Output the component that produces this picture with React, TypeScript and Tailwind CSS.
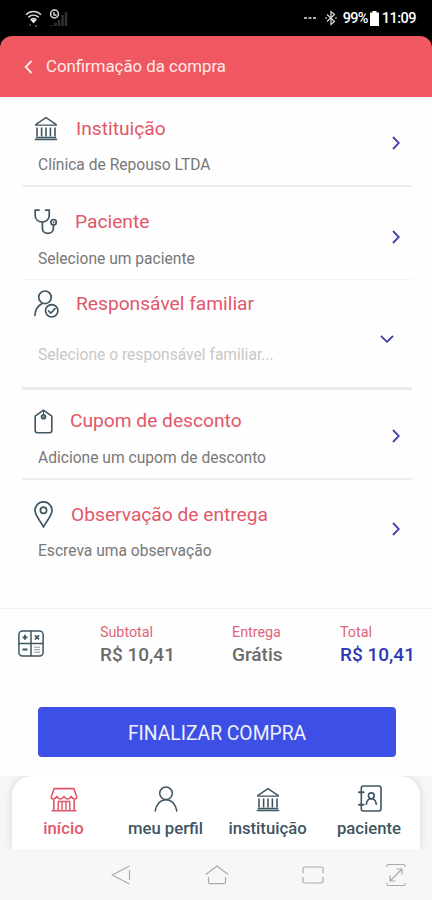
import type { ReactNode } from 'react';

interface IconProps {
  className?: string;
}

function BankIcon({ className }: IconProps) {
  return (
    <svg viewBox="0 0 24 24" fill="none" stroke="currentColor" strokeWidth="1.4" className={className}>
      <path d="M1 8.600h22M1.600 8.200 12 1.200l10.400 7M0.800 23h22.400M1.800 21h20.400" strokeLinejoin="round" />
      <path d="M3 11v9M7.600 11v9M12 11v9M16.400 11v9M21 11v9" strokeWidth="1.600" />
    </svg>
  );
}

function StethoscopeIcon({ className }: IconProps) {
  return (
    <svg viewBox="0 0 24 26" fill="none" stroke="currentColor" strokeWidth="1.700" strokeLinecap="round" className={className}>
      <path d="M5 1.200H1.200v5.300c0 3.800 2.800 6.500 7 6.500s7-2.700 7-6.500V1.200h-3.600" />
      <path d="M8.400 13v6.200c0 3 2.200 5.100 5.400 5.100s5.600-2.100 5.600-5.100V16" />
      <circle cx="19.600" cy="13.200" r="2.700" />
      <path d="M19.600 13v.4" />
    </svg>
  );
}

function PersonCheckIcon({ className }: IconProps) {
  return (
    <svg viewBox="0 0 25 28" fill="none" stroke="currentColor" strokeWidth="1.700" strokeLinecap="round" strokeLinejoin="round" className={className}>
      <circle cx="11" cy="7.300" r="6.300" />
      <path d="M0.900 25.500c.3-5.300 2.600-9.600 7.200-12" />
      <circle cx="17.700" cy="20.800" r="6.200" />
      <path d="m14.600 21 2.200 2.200 4.200-4.600" />
    </svg>
  );
}

function TagIcon({ className }: IconProps) {
  return (
    <svg viewBox="0 0 19 25" fill="none" stroke="currentColor" strokeWidth="1.600" strokeLinejoin="round" className={className}>
      <path d="M9.500 1.200 1.200 7.200v14.300c0 1.400.8 2.200 2.200 2.200h12.200c1.400 0 2.200-.8 2.200-2.200V7.200z" />
      <path d="M9.500 2v3.600" strokeWidth="1" />
      <circle cx="9.500" cy="7.800" r="2" fill="currentColor" fillOpacity=".6" />
    </svg>
  );
}

function PinIcon({ className }: IconProps) {
  return (
    <svg viewBox="0 0 19 27" fill="none" stroke="currentColor" strokeWidth="1.700" strokeLinejoin="round" className={className}>
      <path d="M9.500 26C7 20.500 1 15 1 9.300a8.500 8.500 0 0 1 17 0C18 15 12 20.500 9.500 26z" />
      <circle cx="9.500" cy="9.300" r="3.100" />
    </svg>
  );
}

function CalculatorIcon({ className }: IconProps) {
  return (
    <svg viewBox="0 0 26 27" fill="none" stroke="currentColor" strokeWidth="1.500" className={className}>
      <rect x="0.900" y="1" width="24.200" height="25" rx="3.500" />
      <path d="M13 1v25M1 13.500h24" />
      <path d="M7 4.800v5M4.500 7.300h5M4.500 19.500h5" strokeWidth="1.800" />
      <path d="m17 5.300 4 4M21 5.300l-4 4" strokeWidth="1.800" />
      <path d="M16 17.200h6M16 19.700h6M16 22.200h6" strokeWidth="1" strokeOpacity=".6" />
    </svg>
  );
}

function StoreIcon({ className }: IconProps) {
  return (
    <svg viewBox="0 0 28 25" fill="none" stroke="currentColor" strokeWidth="1.600" strokeLinejoin="round" className={className}>
      <path d="M4.200 1.600h19.600l3 8.400c0 1.400-.8 2-2 2-1.600 0-2.800-.9-3.600-2.600-.8 1.700-1.800 2.600-3.400 2.600s-2.800-.9-3.800-2.600c-1 1.700-2.200 2.600-3.800 2.600s-2.600-.9-3.400-2.600C6 11.100 4.800 12 3.200 12c-1.200 0-2-.6-2-2z" />
      <path d="M3.800 12.500v11M24.200 12.500v11M1.500 23.700h25" />
      <path d="M8.300 23v-8.500h11.400V23M12 15v8M16 15v8" strokeWidth="1.400" />
    </svg>
  );
}

function PersonIcon({ className }: IconProps) {
  return (
    <svg viewBox="0 0 24 26" fill="none" stroke="currentColor" strokeWidth="1.500" strokeLinecap="round" className={className}>
      <circle cx="12" cy="7.300" r="6.300" />
      <path d="M1.200 25C2.600 18 6.600 13.700 12 13.700S21.400 18 22.800 25" />
    </svg>
  );
}

function ContactsIcon({ className }: IconProps) {
  return (
    <svg viewBox="0 0 24 27" fill="none" stroke="currentColor" strokeWidth="1.600" strokeLinecap="round" className={className}>
      <rect x="3.300" y="1" width="19.700" height="25" rx="2.200" />
      <path d="M1 7.300h4.500M1 19.700h4.500" strokeWidth="2" />
      <circle cx="13.300" cy="10.800" r="2.900" />
      <path d="M8.300 19.300c.4-3.600 2-5.600 5-5.600s4.600 2 5 5.600" />
    </svg>
  );
}

function Chevron({ className }: IconProps) {
  return (
    <svg viewBox="0 0 8 14" fill="none" stroke="currentColor" strokeWidth="1.800" className={className}>
      <path d="m1 1 5.800 6L1 13" />
    </svg>
  );
}

interface RowProps {
  icon: ReactNode;
  title: string;
  text: string;
  className: string;
  titleClass: string;
  textClass?: string;
  chevronClass?: string;
}

function Row({ icon, title, text, className, titleClass, textClass = 'mt-[13px] text-[#787878]', chevronClass = 'mt-5 mr-3' }: RowProps) {
  return (
    <section className={`flex justify-between ml-[22px] mr-5 ${className}`}>
      <div>
        <div className="flex items-center h-6 ml-3">
          <div className="w-[27px] shrink-0 text-[#3f5563]">{icon}</div>
          <h2 className={`text-[19.2px] leading-6 text-[#e2566a] whitespace-nowrap ${titleClass}`}>{title}</h2>
        </div>
        <p className={`ml-4 text-[15.6px] leading-6 whitespace-nowrap ${textClass}`}>{text}</p>
      </div>
      <Chevron className={`w-2 h-3.5 text-[#4540b0] shrink-0 ${chevronClass}`} />
    </section>
  );
}

function StatusBar() {
  return (
    <div className="flex items-center justify-between h-9 pl-[25px] pr-4 bg-black text-white">
      <div className="flex items-center gap-2">
        <svg viewBox="0 0 18 18" fill="none" stroke="#d8d8d8" strokeWidth="1.600" className="w-[17px] h-[17px]">
          <path d="M1 5c4.500-4.500 11.500-4.500 16 0M3.500 7.800c3.300-3 7.700-3 11 0M6 10.300c1.800-1.500 4.200-1.500 6 0" />
          <path d="M5.500 10h7L9 14z" fill="#fff" stroke="none" />
          <path d="M5.500 15v2M11.500 16v2" stroke="#666" />
        </svg>
        <svg viewBox="0 0 18 18" fill="none" className="w-[18px] h-[18px]">
          <path d="M2 17v-1M5.500 17v-3M9 17v-6M12.500 17V6M16 17V3" stroke="#303030" strokeWidth="2.500" />
          <circle cx="4.500" cy="5" r="3.900" stroke="#ddd" strokeWidth="1.500" />
          <path d="M4 3v3h2.500" stroke="#ddd" strokeWidth="1.300" />
        </svg>
      </div>
      <div className="flex items-center font-medium text-[14.5px] leading-none">
        <svg viewBox="0 0 12 4" className="w-3 h-1 mr-[9px]" fill="#aaa">
          <path d="M0 1h3v2H0zM4.500 1h3v2h-3zM9 1h3v2H9z" />
        </svg>
        <svg viewBox="0 0 12 16" fill="none" stroke="#ddd" strokeWidth="1.200" className="w-3 h-4 mr-1.5">
          <path d="m2 4.500 7.500 7L6 14.500v-13l3.500 3-7.500 7M0 8h2M10 8h2" />
        </svg>
        <span className="mt-0.5 tracking-[-0.7px]">99%</span>
        <svg viewBox="0 0 9 15" className="w-[9px] h-[15px] ml-0.5" fill="#fff">
          <path d="M2.500 0h4v1.500H9V15H0V1.500h2.500z" />
        </svg>
        <span className="mt-0.5 ml-[3px] tracking-[-0.5px]">11:09</span>
      </div>
    </div>
  );
}

function Summary() {
  return (
    <div className="flex h-[99px] border-t border-[#f1f1f1] text-[#6b6b6b] whitespace-nowrap">
      <CalculatorIcon className="w-[26px] h-[27px] ml-[18px] mt-[21px] text-[#3f5563] shrink-0" />
      <div className="ml-14 mt-3 w-[132px]">
        <p className="text-[14.3px] leading-[22px] text-[#dc6678]">Subtotal</p>
        <p className="text-[19px] leading-6 font-medium">R$ 10,41</p>
      </div>
      <div className="mt-3 w-[108px]">
        <p className="text-[14.3px] leading-[22px] text-[#dc6678]">Entrega</p>
        <p className="text-[19px] leading-6 font-medium">Grátis</p>
      </div>
      <div className="mt-3">
        <p className="text-[14.3px] leading-[22px] text-[#dc6678]">Total</p>
        <p className="text-[19px] leading-6 font-medium text-[#2e37b5]">R$ 10,41</p>
      </div>
    </div>
  );
}

function TabBar() {
  return (
    <div className="h-[73px] px-3 bg-[#f7f7f7] overflow-hidden">
      <nav className="flex h-[73px] rounded-t-[20px] bg-white shadow-[0_0_8px_rgba(0,0,0,0.14)] text-[#3f5563] text-[16.7px] font-medium leading-5 whitespace-nowrap">
        <a className="flex flex-col items-center w-[103px] pt-[11px] text-[#e2566a]">
          <StoreIcon className="w-7 h-[25px]" />
          <span className="mt-[7px]">início</span>
        </a>
        <a className="flex flex-col items-center w-[101px] pt-[10px]">
          <PersonIcon className="w-6 h-[26px]" />
          <span className="mt-[7px]">meu perfil</span>
        </a>
        <a className="flex flex-col items-center w-[103px] pt-[11px]">
          <BankIcon className="w-6 h-[25px]" />
          <span className="mt-[7px]">instituição</span>
        </a>
        <a className="flex flex-col items-center w-[100px] pt-[9px]">
          <ContactsIcon className="w-6 h-[27px] ml-0.5" />
          <span className="mt-[7px]">paciente</span>
        </a>
      </nav>
    </div>
  );
}

function SystemBar() {
  return (
    <div className="flex items-center h-[51px] pl-[111px] bg-[#f7f7f7] text-[#aaa]">
      <svg viewBox="0 0 20 20" fill="none" stroke="currentColor" strokeWidth="1.200" className="w-5 h-5">
        <path d="M18.500 1 1.200 10l17.300 9M18.500 5v10" />
      </svg>
      <svg viewBox="0 0 24 20" fill="none" stroke="currentColor" strokeWidth="1.200" className="w-6 h-5 ml-[74px]">
        <path d="M.8 9.500 12 1l11.200 8.500M3.500 12v5c0 1 .6 1.700 1.700 1.700h13.600c1.100 0 1.700-.7 1.700-1.700v-5" />
      </svg>
      <svg viewBox="0 0 22 18" fill="none" stroke="currentColor" strokeWidth="1.200" className="w-[22px] h-[18px] ml-[73px]">
        <path d="M1 7V2.500C1 1.500 1.500 1 2.500 1h17c1 0 1.500.5 1.500 1.500V7M1 11v4.500c0 1 .5 1.500 1.500 1.500h17c1 0 1.500-.5 1.500-1.500V11" />
      </svg>
      <svg viewBox="0 0 20 24" fill="none" stroke="currentColor" strokeWidth="1.200" className="w-5 h-6 ml-[62px]">
        <path d="M1 4V3c0-1 .5-1.500 1.500-1.500h15c1 0 1.500.5 1.500 1.500v1M1 20v1c0 1 .5 1.500 1.500 1.500h15c1 0 1.500-.5 1.500-1.500v-1" />
        <path d="m4 18 12-12M10.500 6H16v5.500M9.500 18H4v-5.500" />
      </svg>
    </div>
  );
}

export default function App() {
  return (
    <div className="w-[432px] h-[900px] flex flex-col overflow-hidden bg-[#fefefe] font-['Roboto',sans-serif]">
      <StatusBar />
      <div className="bg-black">
        <header className="flex items-center h-[61px] pl-6 rounded-t-xl bg-[#ef5860] text-[#ffe9e9]">
          <Chevron className="w-[9px] h-3.5 rotate-180" />
          <h1 className="pt-px ml-[13px] text-[16.8px]">Confirmação da compra</h1>
        </header>
      </div>

      <main className="h-[511px] shrink-0">
        <Row
          icon={<BankIcon className="w-6 h-[25px]" />}
          title="Instituição"
          text="Clínica de Repouso LTDA"
          className="h-[90px] pt-[19px] border-b-2 border-[#eee]"
          titleClass="ml-[15px] pt-px"
        />
        <Row
          icon={<StethoscopeIcon className="w-6 h-[26px]" />}
          title="Paciente"
          text="Selecione um paciente"
          className="h-[93px] pt-[23px] border-b border-[#f4f4f4]"
          titleClass="ml-[14px]"
        />
        <Row
          icon={<PersonCheckIcon className="w-[25px] h-7" />}
          title="Responsável familiar"
          text="Selecione o responsável familiar..."
          className="h-[110px] pt-3 border-b-[3px] border-[#ebebeb]"
          titleClass="ml-[15px]"
          textClass="mt-[27px] text-[#c8c8c8]"
          chevronClass="mt-10 mr-[21px] rotate-90"
        />
        <Row
          icon={<TagIcon className="w-[19px] h-[25px]" />}
          title="Cupom de desconto"
          text="Adicione um cupom de desconto"
          className="h-[90px] pt-[19px] border-b-2 border-[#eee]"
          titleClass="ml-[9px]"
        />
        <Row
          icon={<PinIcon className="w-[19px] h-[27px]" />}
          title="Observação de entrega"
          text="Escreva uma observação"
          className="h-[93px] pt-[22px] border-b border-[#fbfbfb]"
          titleClass="ml-[10px] pt-px"
        />
      </main>

      <Summary />

      <button type="button" className="pt-1 ml-[38px] mr-9 h-[50px] shrink-0 rounded bg-[#3d4fe5] text-[#eef0ff] text-[19.3px]">
        FINALIZAR COMPRA
      </button>

      <div className="mt-[19px]">
        <TabBar />
      </div>
      <SystemBar />
    </div>
  );
}
